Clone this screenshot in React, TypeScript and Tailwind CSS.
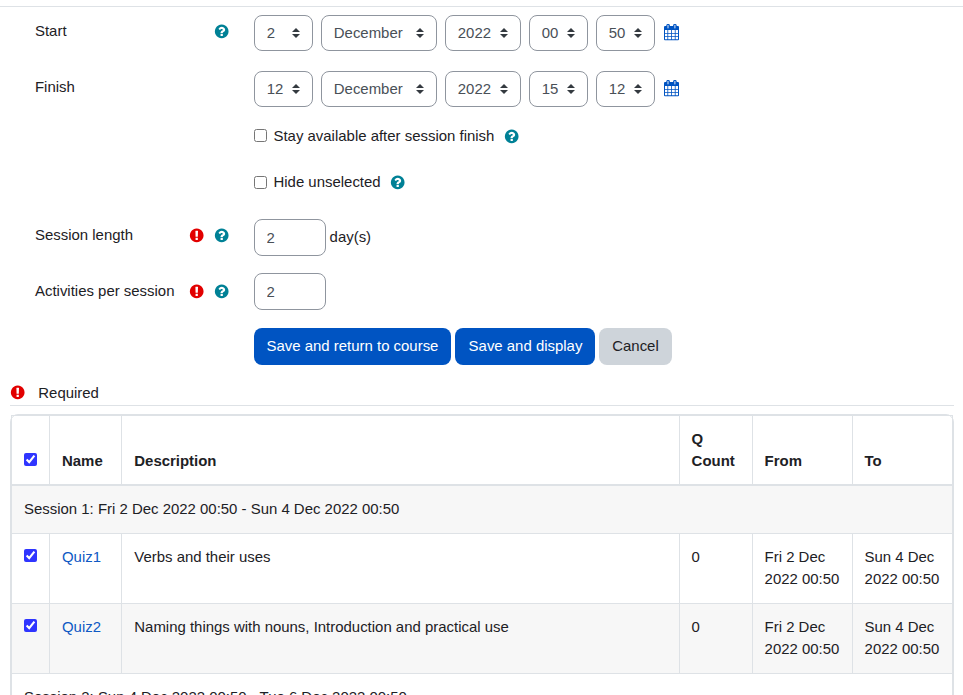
import React from "react";

const HELP =
  "M1024 1376v-192q0-14-9-23t-23-9h-192q-14 0-23 9t-9 23v192q0 14 9 23t23 9h192q14 0 23-9t9-23zm256-672q0-88-55.5-163t-138.5-116-170-41q-243 0-371 213-15 24 8 42l132 100q7 6 19 6 16 0 25-12 53-68 86-92 34-24 86-24 48 0 85.5 26t37.5 59q0 38-20 61t-68 45q-63 28-115.5 86.5t-52.5 125.5v36q0 14 9 23t23 9h192q14 0 23-9t9-23q0-19 21.5-49.5t54.5-49.5q32-18 49-28.5t46-35 44.5-48 28-60.5 12.5-81zm384 192q0 209-103 385.5t-279.5 279.5-385.5 103-385.5-103-279.5-279.5-103-385.5 103-385.5 279.5-279.5 385.5-103 385.5 103 279.5 279.5 103 385.5z";
const REQUIRED =
  "M896 128q209 0 385.5 103t279.5 279.5 103 385.5-103 385.5-279.5 279.5-385.5 103-385.5-103-279.5-279.5-103-385.5 103-385.5 279.5-279.5 385.5-103zm128 1247v-190q0-14-9-23.5t-22-9.5h-192q-13 0-23 10t-10 23v190q0 13 10 23t23 10h192q13 0 22-9.5t9-23.5zm-2-344l18-621q0-12-10-18-10-8-24-8h-220q-14 0-24 8-10 6-10 18l17 621q0 10 10 17.5t24 7.5h185q14 0 23.5-7.5t10.5-17.5z";

function Icon({ path, className }: { path: string; className: string }) {
  return (
    <svg viewBox="0 0 1792 1792" className={`size-4 shrink-0 fill-current ${className}`}>
      <path d={path} />
    </svg>
  );
}

const HelpIcon = () => <Icon path={HELP} className="translate-x-[-0.3px] translate-y-[0.4px] text-[#008196]" />;
const RequiredIcon = () => <Icon path={REQUIRED} className="translate-x-[-0.3px] translate-y-[0.4px] text-[#e20000]" />;

function CalendarIcon() {
  return (
    <svg viewBox="0 0 15 17" className="ml-px h-[17px] w-[15px] shrink-0 text-[#0054c2]">
      <path
        fill="currentColor"
        fillRule="evenodd"
        d="M1 2h13a1 1 0 0 1 1 1v12.2a1 1 0 0 1-1 1H1a1 1 0 0 1-1-1V3a1 1 0 0 1 1-1zM1 6v3h2.4V6zM4.2 6v3h2.9V6zM7.9 6v3h2.9V6zM11.6 6v3H14V6zM1 9.8v2.4h2.4V9.8zM4.2 9.8v2.4h2.9V9.8zM7.9 9.8v2.4h2.9V9.8zM11.6 9.8v2.4H14V9.8zM1 13v2.2h2.4V13zM4.2 13v2.2h2.9V13zM7.9 13v2.2h2.9V13zM11.6 13v2.2H14V13z"
      />
      <rect x="2.4" y="0" width="3.4" height="5" rx="1.3" fill="currentColor" />
      <rect x="9.2" y="0" width="3.4" height="5" rx="1.3" fill="currentColor" />
      <rect x="3.5" y="1" width="1" height="3.4" rx=".4" fill="#e2ecf9" />
      <rect x="10.4" y="1" width="1" height="3.4" rx=".4" fill="#e2ecf9" />
    </svg>
  );
}

function Label({ text, required, help }: { text: string; required?: boolean; help?: boolean }) {
  return (
    <div className="flex h-8 w-[219px] shrink-0 items-center pr-6">
      <span className="grow">{text}</span>
      <span className="flex gap-[9px]">
        {required && <RequiredIcon />}
        {help && <HelpIcon />}
      </span>
    </div>
  );
}

function Select({ value, width }: { value: string; width: string }) {
  return (
    <button
      className={`flex h-9 items-center justify-between rounded-lg border border-[#8f959e] pr-3 pl-[11.8px] text-[#495057] ${width}`}
    >
      <span>{value}</span>
      <svg viewBox="0 0 4 5" className="h-2.5 w-2">
        <path fill="#343a40" d="M2 0L0 2h4zm0 5L0 3h4z" />
      </svg>
    </button>
  );
}

function DateRow({ label, values, help }: { label: string; values: string[]; help?: boolean }) {
  const widths = ["w-[59px]", "w-[116px]", "w-[76px]", "w-[59px]", "w-[59px]"];
  return (
    <div className="flex h-14">
      <Label text={label} help={help} />
      <div className="flex h-9 items-start gap-2">
        {values.map((v, i) => (
          <Select key={i} value={v} width={widths[i]} />
        ))}
        <div className="pt-[9px]">
          <CalendarIcon />
        </div>
      </div>
    </div>
  );
}

function CheckRow({ label, raised }: { label: string; raised?: boolean }) {
  return (
    <div className="ml-[219px] flex h-[22px] items-center">
      <input type="checkbox" className={`size-[13px] ${raised ? "mb-0.5" : ""}`} />
      <span className="mr-[9.3px] ml-[6.5px]">{label}</span>
      <HelpIcon />
    </div>
  );
}

function NumberRow({ label, suffix, labelOffset }: { label: string; suffix?: string; labelOffset?: string }) {
  return (
    <div className="flex">
      <div className={labelOffset}>
        <Label text={label} required help />
      </div>
      <input
        defaultValue="2"
        className="h-[37px] w-[72px] rounded-lg border border-[#8f959e] pr-3 pl-[11.6px] text-[#495057]"
      />
      {suffix && <span className="ml-[3.6px] pt-[7px]">{suffix}</span>}
    </div>
  );
}

const cell = "border-t border-l border-[#dee2e6] py-3 pr-2 pl-3 last:border-r";
const descriptionCell = "border-t border-l border-[#dee2e6] py-3 pr-2 pl-[12.3px]";
const rightCell = "border-t border-l border-[#dee2e6] py-3 pr-2 pl-[11.6px] last:border-r";
const headCell =
  "border-t border-b-2 border-l border-[#dee2e6] pr-2 pb-3 text-left align-bottom font-bold last:border-r";

const Check = () => (
  <input type="checkbox" defaultChecked className="block size-[13px] accent-[#2f35ff]" />
);

function QuizRow({ name, description, striped }: { name: string; description: string; striped?: boolean }) {
  return (
    <tr className={`h-[70px] align-top ${striped ? "bg-[#f7f7f7]" : "bg-white"}`}>
      <td className="border-t border-l border-[#dee2e6] px-3 pt-[15px]">
        <Check />
      </td>
      <td className={cell}>
        <a className="text-[#0f5ac4]">{name}</a>
      </td>
      <td className={descriptionCell}>{description}</td>
      <td className={rightCell}>0</td>
      <td className={rightCell}>Fri 2 Dec 2022 00:50</td>
      <td className={rightCell}>Sun 4 Dec 2022 00:50</td>
    </tr>
  );
}

export default function App() {
  return (
    <div className="h-[695px] w-[963px] overflow-hidden bg-white font-['Liberation_Sans',Arial,sans-serif] text-[14.94px] leading-[22px] text-[#1d2125]">
      <div className="h-[7px] border-b border-[#dee2e6]" />
      <form className="pt-2 pl-[35px]">
        <DateRow label="Start" help values={["2", "December", "2022", "00", "50"]} />
        <DateRow label="Finish" values={["12", "December", "2022", "15", "12"]} />
        <div className="-mt-0.5 flex flex-col gap-6 pb-[26px]">
          <CheckRow label="Stay available after session finish" raised />
          <CheckRow label="Hide unselected" />
        </div>
        <div className="flex h-[54px]">
          <NumberRow label="Session length" suffix="day(s)" />
        </div>
        <div className="flex h-[55px]">
          <NumberRow label="Activities per session" labelOffset="pt-0.5" />
        </div>
        <div className="ml-[219px] flex h-[37px] gap-1">
          <button type="button" className="w-[197px] rounded-lg bg-[#0054c2] pb-0.5 text-white">
            Save and return to course
          </button>
          <button type="button" className="w-[140px] rounded-lg bg-[#0054c2] pb-0.5 pl-px text-white">
            Save and display
          </button>
          <button type="button" className="w-[73px] rounded-lg bg-[#ced4da] pb-0.5 text-[#1d2125]">
            Cancel
          </button>
        </div>
      </form>
      <div className="mx-[10px] mt-[17px] flex h-6 w-[944px] items-start border-b border-[#dee2e6]">
        <div className="pt-[2px]">
          <RequiredIcon />
        </div>
        <span className="ml-[12.3px]">Required</span>
      </div>
      <div className="mt-2 ml-[10px] w-[944px] rounded-lg border border-[#dee2e6]">
        <table className="w-[942px] table-fixed border-separate border-spacing-0">
          <colgroup>
            <col className="w-[38px]" />
            <col className="w-[72px]" />
            <col className="w-[558px]" />
            <col className="w-[73px]" />
            <col className="w-[100px]" />
            <col className="w-[101px]" />
          </colgroup>
          <thead>
            <tr className="h-[71px]">
              <th className={`${headCell} pl-3`}>
                <div className="pb-[6px]">
                  <Check />
                </div>
              </th>
              <th className={`${headCell} pl-3`}>Name</th>
              <th className={`${headCell} pl-[12.3px]`}>Description</th>
              <th className={`${headCell} pl-[11.6px]`}>Q Count</th>
              <th className={`${headCell} pl-[11.6px]`}>From</th>
              <th className={`${headCell} pl-[11.6px]`}>To</th>
            </tr>
          </thead>
          <tbody>
            <tr className="h-[47px] bg-[#f7f7f7] align-top">
              <td colSpan={6} className="border-x border-[#dee2e6] p-3">
                Session 1: Fri 2 Dec 2022 00:50 - Sun 4 Dec 2022 00:50
              </td>
            </tr>
            <QuizRow name="Quiz1" description="Verbs and their uses" />
            <QuizRow name="Quiz2" description="Naming things with nouns, Introduction and practical use" striped />
            <tr className="h-12 align-top">
              <td colSpan={6} className={cell}>
                Session 2: Sun 4 Dec 2022 00:50 - Tue 6 Dec 2022 00:50
              </td>
            </tr>
          </tbody>
        </table>
      </div>
    </div>
  );
}
